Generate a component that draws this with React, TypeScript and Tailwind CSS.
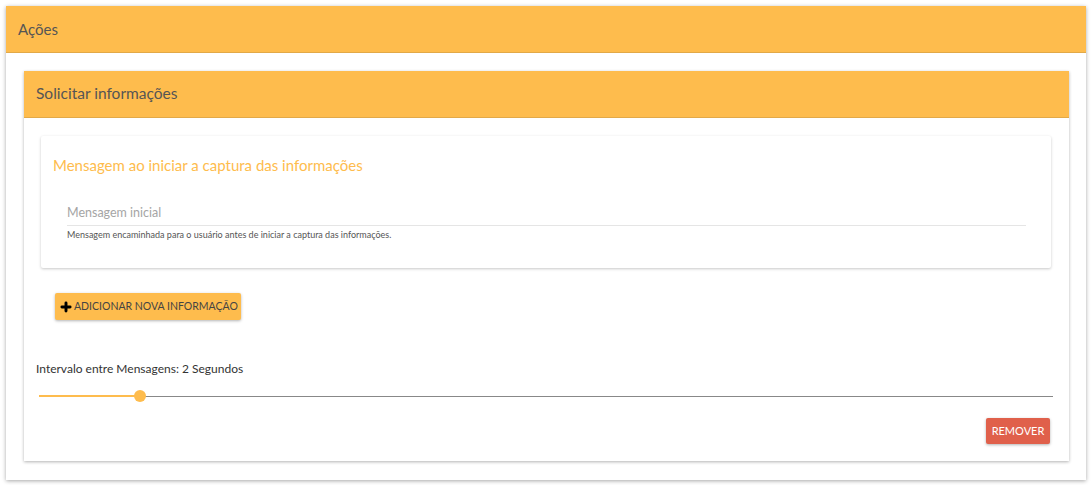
import { Plus } from 'lucide-react';

const font = { fontFamily: 'Lato, "Noto Sans", sans-serif' };

export default function App() {
  return (
    <div className="bg-white w-[1092px] h-[485px] p-[6px]" style={font}>
      <div className="bg-white shadow-[0_1px_4px_rgba(0,0,0,0.35)] h-[474px] flex flex-col">
        <div className="h-[47px] bg-[#febc4d] flex items-center px-3 text-[15px] text-[#555] border-b border-[#e2a948]">
          Ações
        </div>
        <div className="pt-[18px] pl-[18px] pr-[17px]">
          <div className="shadow-[0_1px_3px_rgba(0,0,0,0.3)] h-[390px] flex flex-col">
            <div className="h-[47px] bg-[#febc4d] flex items-center px-3 text-[15.5px] text-[#555] border-b border-[#e2a948]">
              Solicitar informações
            </div>
            <div className="pt-[18px] pl-[17px] pr-[18px]">
              <div className="h-[132px] shadow-[0_1px_3px_rgba(0,0,0,0.22)] rounded-[2px] pl-3 pr-[25px] pt-[19px]">
                <div className="text-[15px] text-[#febc4d] leading-[20px]">
                  Mensagem ao iniciar a captura das informações
                </div>
                <div className="pl-[14px] mt-[30px]">
                  <div className="text-[12.5px] text-[#a5a5a5] leading-[16px] pb-[4px] border-b border-[#e5e5e5]">
                    Mensagem inicial
                  </div>
                  <div className="text-[9px] text-[#555] mt-[2px]">
                    Mensagem encaminhada para o usuário antes de iniciar a captura das informações.
                  </div>
                </div>
              </div>
              <div className="pl-[14px] mt-[25px]">
                <button className="h-[27px] w-[186px] bg-[#febc4d] rounded-[2px] shadow-[0_1px_3px_rgba(0,0,0,0.3)] flex items-center pl-[4px] gap-[1px] text-[10.5px] text-[#444] whitespace-nowrap">
                  <Plus className="w-[14px] h-[14px] text-black shrink-0" strokeWidth={5} />
                  ADICIONAR NOVA INFORMAÇÃO
                </button>
              </div>
            </div>
            <div className="pl-3 pr-4 mt-[41px] text-[12px] text-[#333] leading-[16px]">
              Intervalo entre Mensagens: 2 Segundos
            </div>
            <div className="pl-[15px] pr-[16px] mt-[13px] flex items-center h-[12px]">
              <div className="w-[98px] h-[2px] bg-[#febc4d]" />
              <div className="w-[12px] h-[12px] rounded-full bg-[#febc4d] -mx-[3px] relative" />
              <div className="flex-1 h-[1px] bg-[#888]" />
            </div>
            <div className="flex justify-end pr-[19px] mt-[16px]">
              <button className="h-[26px] w-[64px] bg-[#e0604b] rounded-[2px] shadow-[0_1px_3px_rgba(0,0,0,0.3)] text-white text-[11px]">
                REMOVER
              </button>
            </div>
          </div>
        </div>
      </div>
    </div>
  );
}
